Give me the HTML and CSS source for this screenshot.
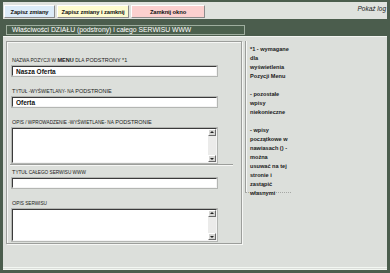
FILE: index.html
```html
<!DOCTYPE html>
<html lang="pl">
<head>
    <meta charset="UTF-8">
    <title>Właściwości działu</title>
    <link rel="stylesheet" href="styles.css">
</head>
<body>
    <div class="frame">
        <div class="toolbar">
            <button class="btn btn-save">Zapisz zmiany</button>
            <button class="btn btn-save-close">Zapisz zmiany i zamknij</button>
            <button class="btn btn-close">Zamknij okno</button>
            <span class="log-link">Pokaż log</span>
        </div>

        <div class="title-band">
            <h2 class="section-title">Właściwości DZIAŁU (podstrony) i całego SERWISU WWW</h2>
        </div>

        <div class="content">
            <div class="form-col">
                <div class="form-box">
                    <div class="field">
                        <label>N<span class="sc">azwa pozycji w</span> <b>MENU</b> <span class="sc">dla</span> PODSTRONY *1</label>
                        <input type="text" class="text-input" value="Nasza Oferta">
                    </div>
                    <div class="field">
                        <label>T<span class="sc">ytuł -wyświetlany- na</span> PODSTRONIE</label>
                        <input type="text" class="text-input" value="Oferta">
                    </div>
                    <div class="field">
                        <label>O<span class="sc">pis / wprowadzenie -wyświetlane- na</span> PODSTRONIE</label>
                        <div class="area">
                            <textarea class="area-text"></textarea>
                            <div class="scroll">
                                <span class="arrow up"></span>
                                <span class="arrow down"></span>
                            </div>
                        </div>
                    </div>

                    <div class="separator"></div>

                    <div class="field">
                        <label>T<span class="sc">ytuł całego serwisu www</span></label>
                        <input type="text" class="text-input" value="">
                    </div>
                    <div class="field">
                        <label>O<span class="sc">pis serwisu</span></label>
                        <div class="area area-small">
                            <textarea class="area-text"></textarea>
                            <div class="scroll">
                                <span class="arrow up"></span>
                                <span class="arrow down"></span>
                            </div>
                        </div>
                    </div>
                </div>
            </div>

            <div class="notes">
                *1 - wymagane<br>
                dla<br>
                wyświetlenia<br>
                Pozycji Menu<br>
                <br>
                - pozostałe<br>
                wpisy<br>
                niekonieczne<br>
                <br>
                - wpisy<br>
                początkowe w<br>
                nawiasach () -<br>
                można<br>
                usuwać na tej<br>
                stronie i<br>
                zastąpić<br>
                własnymi
            </div>
        </div>
        <div class="bottom-line"></div>
    </div>
</body>
</html>
```

FILE: styles.css
```css
body {
    margin: 0;
    padding: 0;
    background: #4b5d4d;
    font-family: "Liberation Sans", Arial, sans-serif;
    color: #1a1a1a;
}

.frame {
    width: 390px;
    height: 273px;
    box-sizing: border-box;
    padding: 2px 3px 3px 3px;
    display: flex;
    flex-direction: column;
}

.toolbar {
    height: 17px;
    background: #dfe2de;
    display: flex;
    align-items: flex-start;
    padding: 3px 0 0 1px;
    box-sizing: border-box;
    gap: 2px;
}

.btn {
    height: 13px;
    padding: 0;
    margin: 0;
    font-family: inherit;
    font-size: 5.8px;
    font-weight: bold;
    letter-spacing: -0.1px;
    white-space: nowrap;
    color: #111;
    border: 1px solid;
    border-color: #ffffff #8c8c8c #8c8c8c #ffffff;
    cursor: pointer;
}

.btn-save {
    width: 51px;
    background: #dcecf8;
}

.btn-save-close {
    width: 72px;
    background: #fdfbcf;
}

.btn-close {
    width: 74px;
    background: #fbd0cf;
}

.log-link {
    margin-left: auto;
    font-size: 6.5px;
    font-style: italic;
    color: #222;
    padding-right: 1px;
}

.title-band {
    height: 17px;
    padding: 6px 142px 0 3px;
    box-sizing: border-box;
}

.section-title {
    margin: 0;
    height: 10px;
    box-sizing: border-box;
    background: #4b604d;
    border: 1px solid #9fae9f;
    color: #ffffff;
    font-size: 6.8px;
    font-weight: normal;
    line-height: 8px;
    padding-left: 5px;
    white-space: nowrap;
    overflow: hidden;
}

.content {
    flex: 1;
    background: #dcdfdb;
    display: flex;
    padding: 4px 0 0 3px;
    border-top: 1px solid #f2f4f1;
}

.form-col {
    width: 236px;
}

.form-box {
    height: 203px;
    box-sizing: border-box;
    border: 1px solid #9c9e9b;
    box-shadow: inset 1px 1px 0 #f6f7f5, 1px 1px 0 #f6f7f5;
    padding: 14px 0 0 5px;
}

.field {
    display: flex;
    flex-direction: column;
    margin-bottom: 11px;
}

.field label {
    font-size: 5.5px;
    line-height: 8px;
    margin-bottom: 1px;
    color: #1a1a1a;
    white-space: nowrap;
}

.field label .sc {
    font-size: 4.7px;
    text-transform: uppercase;
}

.field label b {
    font-weight: bold;
}

.text-input {
    width: 205px;
    height: 10px;
    box-sizing: border-box;
    margin: 0;
    padding: 0 0 0 3px;
    font-family: inherit;
    font-size: 6.5px;
    font-weight: bold;
    color: #111;
    background: #ffffff;
    border: 1px solid;
    border-color: #3a3a3a #f4f4f4 #f4f4f4 #3a3a3a;
    outline: 1px solid #b4b6b3;
}

.area {
    width: 205px;
    height: 35px;
    box-sizing: border-box;
    display: flex;
    background: #ffffff;
    border: 1px solid;
    border-color: #3a3a3a #f4f4f4 #f4f4f4 #3a3a3a;
    outline: 1px solid #b4b6b3;
}

.area-small {
    height: 32px;
}

.area-text {
    flex: 1;
    border: none;
    margin: 0;
    padding: 0;
    resize: none;
    background: #ffffff;
    overflow: hidden;
}

.scroll {
    width: 8px;
    background: #ebebea;
    display: flex;
    flex-direction: column;
    justify-content: space-between;
}

.arrow {
    width: 8px;
    height: 7px;
    box-sizing: border-box;
    background: #d6d6d4;
    border: 1px solid;
    border-color: #ffffff #6a6a6a #6a6a6a #ffffff;
    position: relative;
}

.arrow::after {
    content: "";
    position: absolute;
    left: 1px;
    border-left: 2px solid transparent;
    border-right: 2px solid transparent;
}

.arrow.up::after {
    top: 1px;
    border-bottom: 2px solid #222;
}

.arrow.down::after {
    top: 2px;
    border-top: 2px solid #222;
}

.separator {
    width: 223px;
    margin: -10px 0 2px -2px;
    border-top: 1px solid #9c9e9b;
    border-bottom: 1px solid #f6f7f5;
}

.notes {
    width: 46px;
    margin: 0 0 0 3px;
    height: 152px;
    box-sizing: border-box;
    border-left: 1px solid #9c9e9b;
    box-shadow: inset 1px 0 0 #f6f7f5;
    border-bottom: 1px dotted #a6a8a5;
    padding: 4px 0 0 4px;
    font-size: 5.6px;
    font-weight: bold;
    line-height: 9px;
    white-space: nowrap;
    color: #1a1a1a;
}

.bottom-line {
    height: 3px;
    background: #dcdfdb;
    border-top: 1px solid #f3f7f2;
    border-bottom: 1px solid #f3f7f2;
    box-sizing: border-box;
}
```
